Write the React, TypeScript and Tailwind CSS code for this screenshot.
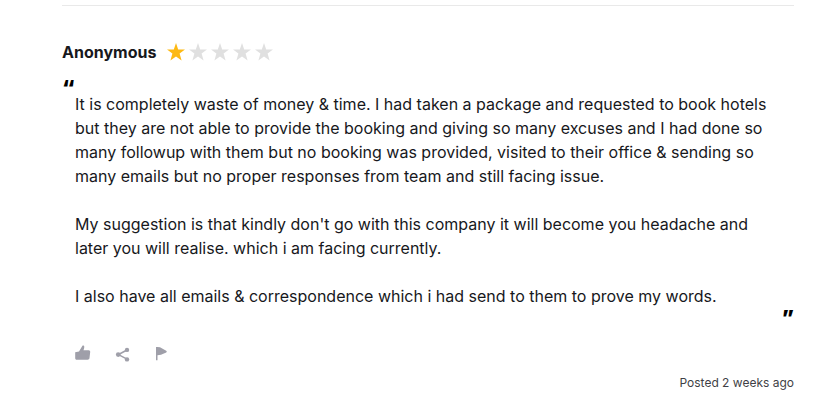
import React from 'react'

type ReviewType = {
  author: string;
  rating: number;
  paragraphs: Array<string>;
  posted: string;
};

const review: ReviewType = {
  author: 'Anonymous',
  rating: 1,
  paragraphs: [
    'It is completely waste of money & time. I had taken a package and requested to book hotels but they are not able to provide the booking and giving so many excuses and I had done so many followup with them but no booking was provided, visited to their office & sending so many emails but no proper responses from team and still facing issue.',
    "My suggestion is that kindly don't go with this company it will become you headache and later you will realise. which i am facing currently.",
    'I also have all emails & correspondence which i had send to them to prove my words.',
  ],
  posted: 'Posted 2 weeks ago',
};

function Star({ filled }: { filled: boolean }) {
  return (
    <svg viewBox="0 0 18 18" className={filled ? 'size-[18px] fill-[#fdb913]' : 'size-[18px] fill-[#e0e0e0]'}>
      <path d="M9 0l2.200 6.400H18l-5.400 4.200 2 7L9 13.600l-5.600 4 2-7L0 6.400h6.800z" />
    </svg>
  )
}

function Rating({ value }: { value: number }) {
  return (
    <div className="flex gap-1" role="img" aria-label={`${value} out of 5 stars`}>
      {[1, 2, 3, 4, 5].map(n => <Star key={n} filled={n <= value} />)}
    </div>
  )
}

function Actions() {
  return (
    <div className="flex items-center gap-6 text-[#9f9fa9]">
      <button type="button" aria-label="Like">
        <svg viewBox="0 0 16 18" className="w-4 h-[18px] fill-current">
          <path d="M.2 8.2 4 7.6 7.3 2c.5-.9 2-.5 2 .9 0 1-.4 2.200-.8 3.300h5.200c1 0 1.600.8 1.500 1.700l-.7 6.200c-.1 1-.9 1.700-1.900 1.700H1.700c-.9 0-1.500-.6-1.500-1.500z" />
        </svg>
      </button>
      <button type="button" aria-label="Share">
        <svg viewBox="0 0 16 18" className="w-4 h-[18px] fill-current">
          <path d="M12 6 3.500 10.600 12 15.100" fill="none" stroke="currentColor" strokeWidth="1.600" />
          <circle cx="12" cy="5.900" r="2.200" />
          <circle cx="3.200" cy="10.600" r="2.300" />
          <circle cx="12" cy="15.400" r="2.200" />
        </svg>
      </button>
      <button type="button" aria-label="Report">
        <svg viewBox="0 0 16 18" className="w-4 h-[18px] fill-current">
          <path d="M1 3h1.500L5 3.200l6.200 3.600c.8.500.8 1.200 0 1.600L6 10.800l-3.500.400v5H1z" />
        </svg>
      </button>
    </div>
  )
}

export default function App() {
  return (
    <main className="bg-white pt-[5px] pl-[62px] pr-6 pb-5 font-['Inter',sans-serif] text-base text-[#17181c]">
      <article className="border-t border-[#e9e9e9] pt-[34px]">
        <header className="flex items-center gap-[11px]">
          <h2 className="font-bold">{review.author}</h2>
          <Rating value={review.rating} />
        </header>
        <blockquote>
          <div className="h-7 pt-3 text-xl leading-6 font-black text-black" aria-hidden="true">“</div>
          <div className="flex flex-col gap-6 pl-[13px] pr-6">
            {review.paragraphs.map((p, index) => <p key={index}>{p}</p>)}
          </div>
          <div className="h-9 text-right text-xl leading-5 font-black text-black" aria-hidden="true">”</div>
        </blockquote>
        <footer className="pl-[13px]">
          <Actions />
          <p className="mt-[13px] text-right text-xs leading-4 text-[#3f3f46]">{review.posted}</p>
        </footer>
      </article>
    </main>
  )
}
